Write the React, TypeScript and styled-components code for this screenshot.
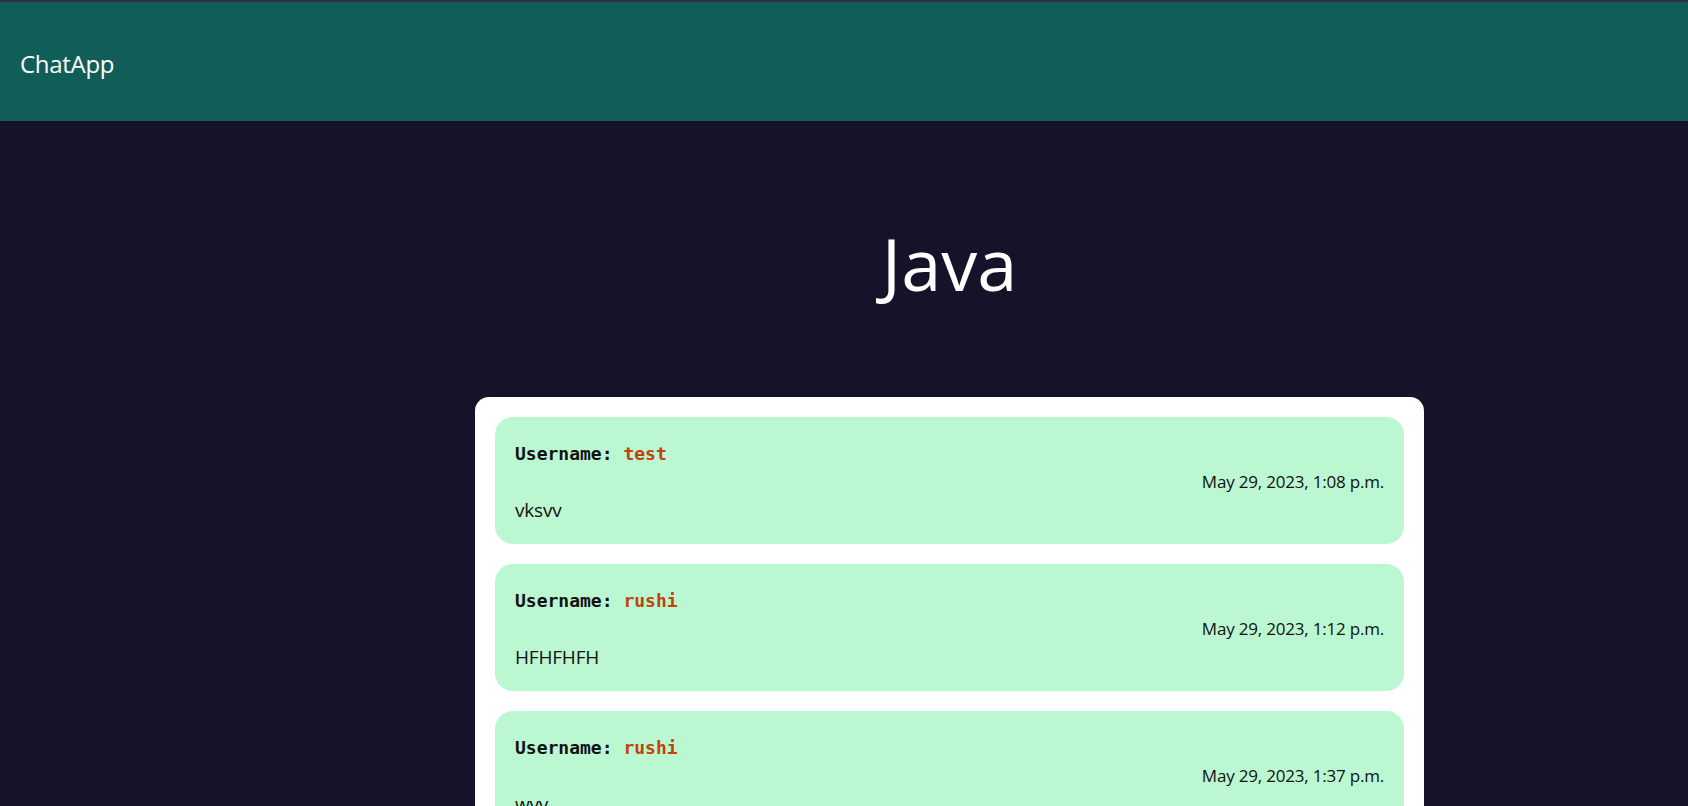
import React from "react";
import styled, { createGlobalStyle } from "styled-components";

const GlobalStyle = createGlobalStyle`
  html, body {
    margin: 0;
    padding: 0;
    background: #15132a;
  }
  body {
    font-family: "Open Sans", "Noto Sans", sans-serif;
    overflow: hidden;
  }
`;

const Page = styled.div`
  min-height: 806px;
  background: #15132a;
`;

const NavBar = styled.nav`
  height: 119px;
  border-top: 2px solid #2d3240;
  background: #115e59;
  display: flex;
  align-items: center;
  padding: 0 20px;
`;

const Brand = styled.span`
  color: #ffffff;
  font-family: "Open Sans", sans-serif;
  font-size: 24px;
  letter-spacing: -0.3px;
  margin-top: 4px;
`;

const Main = styled.main`
  display: grid;
  grid-template-columns: 475px 949px 1fr;
`;

const Column = styled.section`
  grid-column: 2;
  display: flex;
  flex-direction: column;
  align-items: stretch;
`;

const Title = styled.h1`
  margin: 92px 0 0;
  height: 184px;
  text-align: center;
  color: #ffffff;
  font-family: "Open Sans", sans-serif;
  font-weight: 400;
  font-size: 72px;
  line-height: 100px;
`;

const Card = styled.div`
  background: #ffffff;
  border-radius: 14px;
  padding: 20px;
  display: flex;
  flex-direction: column;
  gap: 20px;
`;

const Message = styled.article`
  background: #bbf7d0;
  border-radius: 18px;
  height: 127px;
  box-sizing: border-box;
  padding: 20px 20px 0;
  display: flex;
  flex-direction: column;
`;

const UserLine = styled.div`
  font-family: "DejaVu Sans Mono", "Liberation Mono", monospace;
  font-weight: 700;
  font-size: 18px;
  line-height: 34px;
  color: #111111;
`;

const UserName = styled.span`
  color: #c2410c;
`;

const Stamp = styled.div`
  text-align: right;
  font-family: "Open Sans", sans-serif;
  font-size: 17px;
  line-height: 22px;
  color: #111111;
  letter-spacing: -0.2px;
`;

const Body = styled.p`
  margin: 0;
  font-family: "Open Sans", sans-serif;
  font-size: 19px;
  line-height: 34px;
  color: #111111;
  letter-spacing: -0.2px;
`;

const messages = [
  { user: "test", time: "May 29, 2023, 1:08 p.m.", text: "vksvv" },
  { user: "rushi", time: "May 29, 2023, 1:12 p.m.", text: "HFHFHFH" },
  { user: "rushi", time: "May 29, 2023, 1:37 p.m.", text: "wvv" },
];

export default function App() {
  return (
    <Page>
      <GlobalStyle />
      <NavBar>
        <Brand>ChatApp</Brand>
      </NavBar>
      <Main>
        <Column>
          <Title>Java</Title>
          <Card>
            {messages.map((m, i) => (
              <Message key={i}>
                <UserLine>
                  Username: <UserName>{m.user}</UserName>
                </UserLine>
                <Stamp>{m.time}</Stamp>
                <Body>{m.text}</Body>
              </Message>
            ))}
          </Card>
        </Column>
      </Main>
    </Page>
  );
}
